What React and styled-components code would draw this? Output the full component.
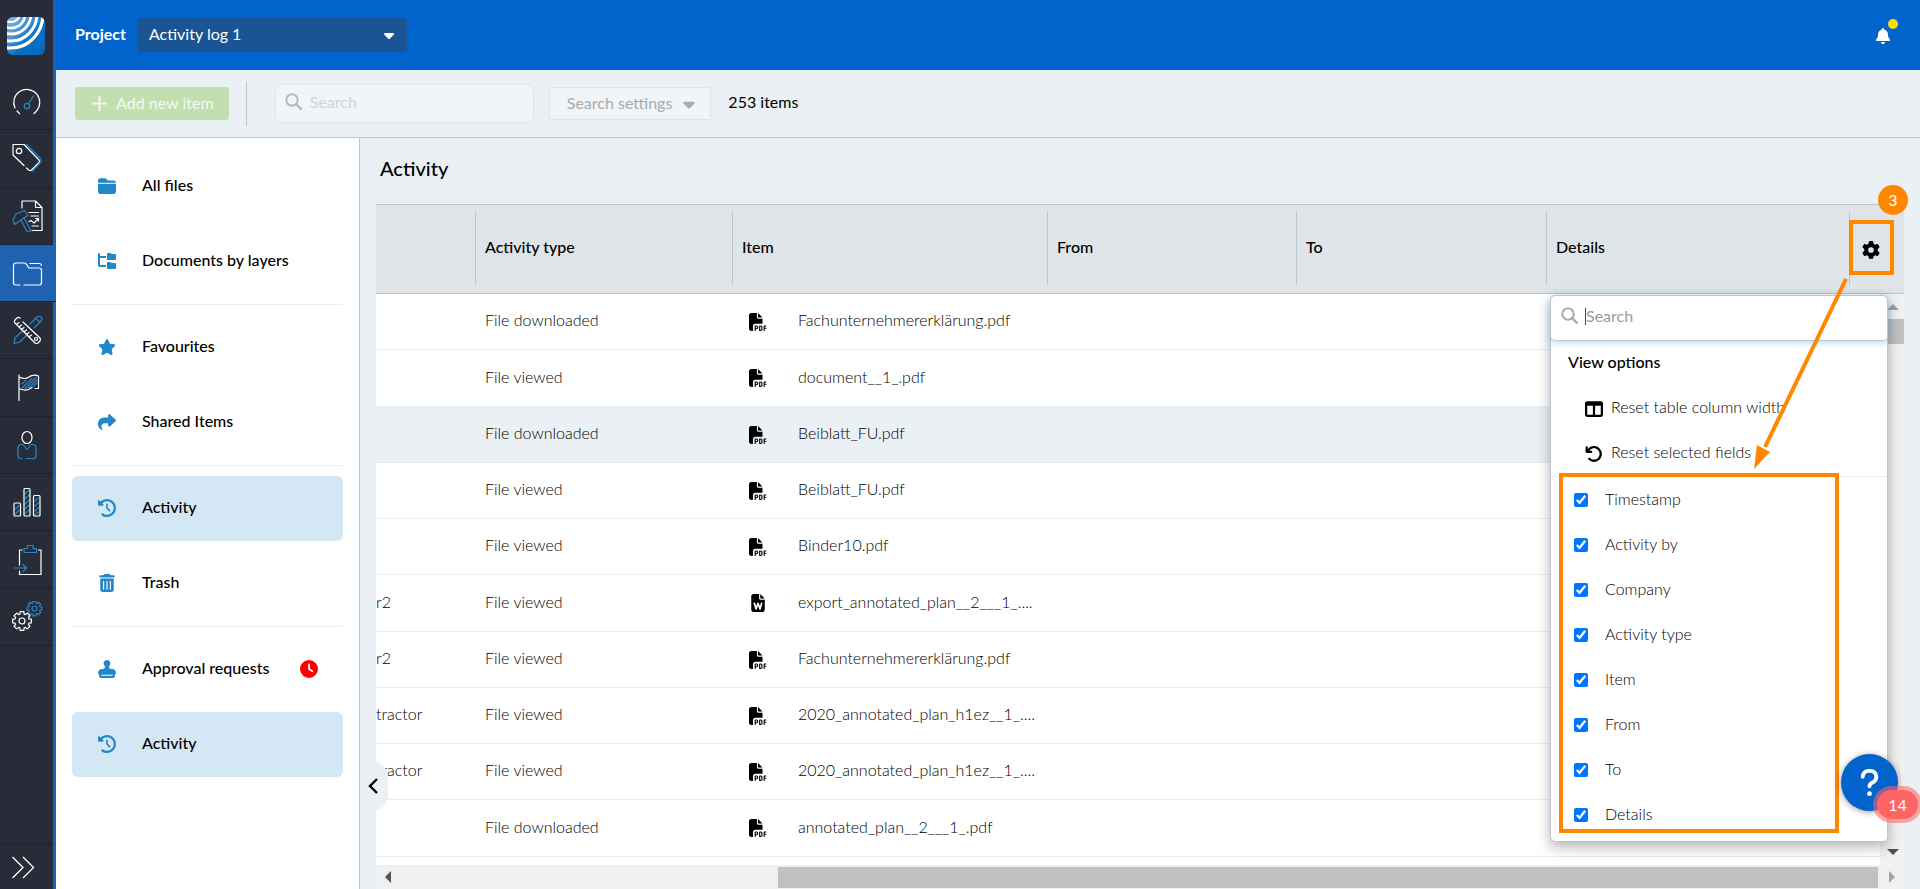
import { useState } from "react";
import styled, { createGlobalStyle, css } from "styled-components";
import {
  FaArrowRotateLeft,
  FaBell,
  FaCaretDown,
  FaClock,
  FaClockRotateLeft,
  FaFilePdf,
  FaFileWord,
  FaFolderClosed,
  FaFolderTree,
  FaGear,
  FaQuestion,
  FaShare,
  FaStamp,
  FaStar,
  FaTableColumns,
  FaTrashCan,
} from "react-icons/fa6";

const colors = {
  rail: "#272c38",
  railLine: "#1c212b",
  railBlue: "#1e62b0",
  header: "#0064cc",
  select: "#1a5493",
  page: "#ebf0f4",
  tableHead: "#dfe4e8",
  line: "#b9c6d3",
  softLine: "#ededed",
  icon: "#2287c9",
  active: "#d4e7f4",
  note: "#ff8700",
};

const GlobalStyle = createGlobalStyle`
  * {
    box-sizing: border-box;
  }
  body {
    margin: 0;
    overflow: hidden;
    font-family: Lato, "Liberation Sans", sans-serif;
    font-size: 16px;
    line-height: 20px;
    color: #000;
  }
  button, input, select {
    font: inherit;
    color: inherit;
  }
`;

const Page = styled.div`
  display: flex;
  height: 100vh;
  background: ${colors.page};
`;

const Rail = styled.nav`
  display: flex;
  flex-direction: column;
  flex: none;
  width: 56px;
  background: ${colors.rail};
  border-right: 3px solid ${colors.railBlue};
`;

const LogoLink = styled.a`
  display: flex;
  justify-content: center;
  padding: 17px 8px 18px 7px;
  height: 73px;
`;

const RailItems = styled.div`
  display: grid;
  grid-template-rows: repeat(10, 1fr);
  height: 573px;
`;

const RailLink = styled.a`
  display: flex;
  align-items: center;
  justify-content: center;
  border-bottom: 1px solid ${colors.railLine};
  ${({ $active }) =>
    $active &&
    css`
      margin-right: -3px;
      padding-right: 3px;
      background: ${colors.railBlue};
    `}
`;

const RailToggle = styled.button`
  display: flex;
  align-items: center;
  height: 45px;
  margin-top: auto;
  padding: 0 12px;
  background: none;
  border: 0;
  border-top: 1px solid ${colors.railLine};
`;

const LineSvg = styled.svg`
  width: 32px;
  height: 32px;
  fill: none;
  stroke: #fff;
  stroke-width: 1.2;
  stroke-linecap: round;
  stroke-linejoin: round;

  .blue {
    stroke: #2a86c6;
  }
`;

const Workspace = styled.div`
  display: flex;
  flex-direction: column;
  flex: 1;
  min-width: 0;
`;

const Header = styled.header`
  display: flex;
  align-items: center;
  height: 70px;
  padding: 0 20px 0 19px;
  background: ${colors.header};
  color: #fff;
`;

// lifts a text slightly above the centre line of the icons beside it
const Label = styled.span`
  display: block;
  padding-bottom: ${({ $lift = 3 }) => $lift}px;
`;

const ProjectLabel = styled.label`
  padding-bottom: 3px;
  font-weight: 700;
`;

const SelectWrap = styled.div`
  display: grid;
  align-items: center;
  width: 269px;
  margin-left: 12px;

  > * {
    grid-area: 1 / 1;
  }
  > svg {
    justify-self: end;
    margin-right: 10px;
    pointer-events: none;
  }
`;

const ProjectSelect = styled.select`
  width: 100%;
  height: 34px;
  padding: 0 11px 2px;
  appearance: none;
  background: ${colors.select};
  border: 0;
  border-radius: 3px;
`;

const BellButton = styled.button`
  position: relative;
  display: flex;
  margin-left: auto;
  padding: 1px 9px 0;
  background: none;
  border: 0;
  color: #fff;
`;

const BellDot = styled.span`
  position: absolute;
  top: -8px;
  right: 2px;
  width: 10px;
  height: 10px;
  border-radius: 50%;
  background: #ffdc00;
`;

const Toolbar = styled.div`
  display: flex;
  align-items: center;
  height: 68px;
  padding: 0 19px;
  border-bottom: 1px solid ${colors.line};
`;

const AddButton = styled.button`
  display: flex;
  align-items: center;
  gap: 9px;
  height: 33px;
  padding: 0 15px 0 17px;
  background: #c2dfb0;
  border: 0;
  border-radius: 3px;
  color: #f1f6f0;
  font-weight: 500;
`;

const ToolbarDivider = styled.span`
  width: 1px;
  height: 45px;
  margin: 0 28px 0 17px;
  background: ${colors.line};
`;

const ToolbarSearch = styled.label`
  display: flex;
  align-items: center;
  gap: 7px;
  width: 259px;
  height: 39px;
  padding: 0 9px 3px;
  background: #f1f5f8;
  border: 1px solid #e0e6ea;
  border-radius: 5px;
  color: #b4b8bb;
`;

const SearchInput = styled.input`
  flex: 1;
  min-width: 0;
  padding: 0;
  background: none;
  border: 0;
  outline: 0;

  &::placeholder {
    color: ${({ $tone }) => $tone};
    opacity: 1;
  }
`;

const SettingsButton = styled.button`
  display: flex;
  align-items: center;
  gap: 8px;
  height: 33px;
  margin: 0 17px 0 15px;
  padding: 0 12px 0 17px;
  background: #f1f5f8;
  border: 1px solid #dce2e7;
  border-radius: 2px;
  color: #a6abae;
`;

const Columns = styled.div`
  display: flex;
  flex: 1;
  min-height: 0;
`;

const Sidebar = styled.nav`
  display: flex;
  flex-direction: column;
  gap: 10px;
  flex: none;
  width: 304px;
  padding: 16px;
  background: #fff;
  border-right: 1px solid ${colors.line};
`;

const SidebarLink = styled.a`
  display: flex;
  align-items: center;
  gap: 26px;
  height: 65px;
  padding: 0 25px 2px 26px;
  border-radius: 6px;
  background: ${({ $active }) => ($active ? colors.active : "transparent")};
  color: #000;
  font-weight: 500;
  text-decoration: none;

  > svg {
    flex: none;
    width: 18px;
    height: 18px;
    color: ${colors.icon};
  }
`;

const PendingBadge = styled.span`
  display: flex;
  margin-left: auto;
  color: #f00;
`;

const SidebarDivider = styled.hr`
  width: 100%;
  height: 1px;
  margin: 0;
  border: 0;
  background: ${colors.softLine};
`;

const Main = styled.main`
  position: relative;
  display: flex;
  flex-direction: column;
  flex: 1;
  min-width: 0;
  padding: 0 16px;
`;

const Title = styled.h1`
  margin: 0;
  padding: 16px 4px 22px;
  font-size: 20px;
  line-height: 28px;
  font-weight: 500;
`;

const TableArea = styled.section`
  position: relative;
  display: flex;
  flex-direction: column;
  flex: 1;
  min-height: 0;
`;

const TableClip = styled.div`
  flex: 1;
  min-height: 0;
  overflow: hidden;
  background: #fff;
`;

const Table = styled.table`
  width: 100%;
  table-layout: fixed;
  border-collapse: separate;
  border-spacing: 0;
  font-weight: 300;

  th {
    height: 90px;
    padding: 0 0 2px;
    background: ${colors.tableHead};
    border-top: 1px solid ${colors.line};
    border-bottom: 1px solid ${colors.line};
    text-align: left;
  }
  tbody tr {
    height: 56px;
  }
  tbody tr:nth-child(4n + 2) {
    height: 57px;
  }
  td {
    padding: 0 9px 0 10px;
    border-bottom: 1px solid ${colors.softLine};
    white-space: nowrap;
    color: #000;
  }
  td:first-child {
    padding: 0;
  }
`;

const TableRow = styled.tr`
  background: ${({ $hovered }) => ($hovered ? colors.page : "#fff")};
`;

const Column = styled.col`
  width: ${({ $width }) => $width};
`;

const HeadCell = styled.div`
  display: flex;
  align-items: center;
  height: 73px;
  padding: 0 0 2px 9px;
  border-left: 1px solid ${({ $plain }) => ($plain ? "transparent" : colors.line)};
  font-weight: 500;
`;

const GearButton = styled.button`
  display: flex;
  align-items: center;
  justify-content: center;
  width: 45px;
  height: 55px;
  margin-left: -10px;
  padding: 5px 1px 0 0;
  background: none;
  border: 4px solid ${colors.note};
`;

const StepBadge = styled.span`
  position: absolute;
  top: -19px;
  right: -4px;
  width: 30px;
  height: 30px;
  border-radius: 50%;
  background: ${colors.note};
  color: #fff;
  line-height: 29px;
  text-align: center;
`;

const FileCell = styled.div`
  display: flex;
  align-items: center;
  gap: 31px;
  padding-left: 7px;

  svg {
    flex: none;
    width: 18px;
    height: 18px;
    color: #000;
  }
`;

const ScrollTrackX = styled.div`
  display: flex;
  align-items: center;
  flex: none;
  height: 24px;
  background: #f0f0f0;
`;

const ScrollThumbX = styled.span`
  flex: 1;
  height: 21px;
  margin: 0 11px 0 387px;
  background: #c0c0c0;
`;

const ScrollTrackY = styled.div`
  position: absolute;
  top: 90px;
  right: 0;
  bottom: 24px;
  display: flex;
  flex-direction: column;
  align-items: center;
  width: 24px;
  padding: 10px 0;
  background: #f1f1f1;
`;

const ScrollThumbY = styled.span`
  width: 16px;
  height: 25px;
  margin: 9px 0 auto 7px;
  background: #c0c0c0;
`;

const Arrow = styled.svg`
  flex: none;
  display: block;
  fill: ${({ $tone }) => $tone};
  ${({ $side }) => $side === "left" && "margin-left: 9px;"}
  ${({ $side }) => $side === "right" && "margin-right: 9px;"}
  ${({ $side }) => !$side && "margin-left: 1px;"}
`;

const CollapseButton = styled.button`
  position: absolute;
  left: 0;
  bottom: 78px;
  display: flex;
  align-items: center;
  width: 28px;
  height: 50px;
  padding: 0 0 0 8px;
  background: ${colors.page};
  border: 0;
  border-radius: 0 16px 16px 0;
`;

const OptionsPanel = styled.div`
  position: absolute;
  top: 91px;
  right: 16px;
  width: 338px;
  background: #fff;
  border: 1px solid ${colors.line};
  border-radius: 5px;
  box-shadow: 0 5px 14px rgba(0, 0, 0, 0.3);
  font-weight: 300;
`;

const PanelSearch = styled.label`
  display: flex;
  align-items: center;
  gap: 6px;
  height: 46px;
  margin: -1px -1px 0;
  padding: 0 10px 4px;
  background: #fff;
  border: 1px solid ${colors.line};
  border-radius: 5px;
  box-shadow: 0 2px 6px rgba(60, 150, 220, 0.35);
  color: #aaa;
  font-weight: 400;
`;

const FocusedSearchInput = styled(SearchInput)`
  height: 17px;
  border-left: 1px solid #444;
`;

const PanelHeading = styled.h2`
  margin: 0;
  padding: 10px 17px 13px;
  font-size: 16px;
  line-height: 22px;
  font-weight: 500;
`;

const ResetButton = styled.button`
  display: flex;
  align-items: center;
  gap: 8px;
  width: 100%;
  height: 45px;
  padding: 0 34px;
  background: none;
  border: 0;

  svg {
    width: 18px;
    height: 18px;
  }
`;

const FieldList = styled.div`
  position: relative;
  padding-bottom: 4px;
  border-top: 1px solid ${colors.softLine};
`;

const FieldLabel = styled.label`
  display: flex;
  align-items: center;
  gap: 17px;
  height: 45px;
  padding-left: 23px;
`;

const FieldCheckbox = styled.input`
  width: 14px;
  height: 14px;
  margin: 0;
  accent-color: #0075ff;
`;

const ListFrame = styled.span`
  position: absolute;
  top: -4px;
  right: 48px;
  bottom: 8px;
  left: 8px;
  border: 4px solid ${colors.note};
  pointer-events: none;
`;

const PointerArrow = styled.svg`
  position: absolute;
  top: 73px;
  right: 54px;
  pointer-events: none;
`;

const HelpButton = styled.button`
  position: absolute;
  right: 22px;
  bottom: 78px;
  display: flex;
  align-items: center;
  justify-content: center;
  width: 57px;
  height: 57px;
  padding: 0;
  background: ${colors.header};
  border: 0;
  border-radius: 50%;
  box-shadow: 0 1px 6px rgba(0, 0, 0, 0.4);
  color: #fff;
`;

const HelpCount = styled.span`
  position: absolute;
  top: 36px;
  left: 36px;
  width: 41px;
  height: 29px;
  border-radius: 15px;
  background: #ff6464;
  box-shadow: 0 0 0 4px rgba(255, 100, 100, 0.55);
  line-height: 29px;
  text-align: center;
`;

const Logo = () => (
  <svg width="38" height="38" viewBox="0 0 38 38" aria-hidden="true">
    <defs>
      <linearGradient id="logoFill" x1="0" y1="0" x2="1" y2="1">
        <stop offset="0" stopColor="#8fbfe6" />
        <stop offset="0.6" stopColor="#0a70c2" />
        <stop offset="1" stopColor="#0068bd" />
      </linearGradient>
      <clipPath id="logoClip">
        <rect width="38" height="38" rx="6" />
      </clipPath>
    </defs>
    <g clipPath="url(#logoClip)">
      <rect width="38" height="38" fill="url(#logoFill)" />
      <g fill="none" stroke="#fff">
        <ellipse cx="4" cy="-1" rx="8" ry="6" strokeWidth="2.2" />
        <ellipse cx="4" cy="-2" rx="14" ry="13" strokeWidth="2.6" />
        <ellipse cx="4" cy="-3" rx="20" ry="20" strokeWidth="2.8" />
        <ellipse cx="4" cy="-3" rx="26" ry="27" strokeWidth="3" />
        <ellipse cx="4" cy="-3" rx="32" ry="34" strokeWidth="3.2" />
      </g>
    </g>
  </svg>
);

const gearPath = (cx, cy, r) => {
  const points = [];
  for (let i = 0; i < 8; i++) {
    [
      [-0.3, 0.76],
      [-0.2, 1],
      [0.2, 1],
      [0.3, 0.76],
    ].forEach(([turn, scale]) => {
      const angle = (i * Math.PI) / 4 + turn;
      points.push(
        `${(cx + Math.cos(angle) * r * scale).toFixed(2)} ${(cy + Math.sin(angle) * r * scale).toFixed(2)}`
      );
    });
  }
  return `M${points.join("L")}Z`;
};

const railItems = [
  {
    label: "Dashboard",
    drawing: (
      <>
        <path d="M8.500 28.500 6 26M4 23A13 13 0 1 1 25.500 26L23 28.500" />
        <circle className="blue" cx="16" cy="21" r="2.700" />
        <path className="blue" d="M17.500 18.500 22.500 11" />
      </>
    ),
  },
  {
    label: "Tags",
    drawing: (
      <>
        <path d="M2 2.500V13L13 23.500M15.500 26 18 28.200Q19.500 29 20.500 28L28 20.500Q29 19 28 18L13 2.500H2" />
        <circle cx="8" cy="9" r="2.700" />
        <path className="blue" d="M15.500 2.500 29.500 16.500Q31 18.500 29.500 20.500L21.500 29" />
      </>
    ),
  },
  {
    label: "Tenders",
    drawing: (
      <>
        <path d="M11 8V1H24.500L31 7.500V30.500H21M24.500 1V7.500H31M18 12.500H27.500M20 16H27.500M18 21.500 20 20.500 23 23 27.500 18.500M24.500 18.500H27.500V21M21 26H27.500" />
        <path
          className="blue"
          d="M5 14 13.500 10.500 17 15.500 13 18 19.500 30Q18.500 32.500 16 31.500L10 20 3.500 24.500 2 20ZM10 20 13 18"
        />
      </>
    ),
  },
  {
    label: "Files",
    active: true,
    drawing: (
      <path d="M9 28H5Q2.500 28 2.500 25.500V8.500Q2.500 6 5 6H13Q15 6 16 8T18 11H28Q30.500 11 30.500 13.500V25.500Q30.500 28 28 28H13M19 6.500H28Q30.500 6.500 30.500 8.500" />
    ),
  },
  {
    label: "Plans",
    drawing: (
      <>
        <path
          className="blue"
          d="M19 10 26 3Q28 1.500 30 3T30 7L23 14M16.500 20.500 8 28.500 3 29.500 4 24 12.500 16M25 4.500 28.500 8"
        />
        <path d="M12 8 29 24Q30 25.500 29 27L27 29Q25.500 30 24 29L3.500 8.500Q3 7 4 6L6.500 3.500Q8 3 9 4M6 10 8 8.500M8.500 12.500 10.500 11M11 15 13 13.500M13.500 17.500 15.500 16M16 20 18 18.500M18.500 22.500 20.500 21" />
        <circle cx="25" cy="25" r="1.500" />
      </>
    ),
  },
  {
    label: "Milestones",
    drawing: (
      <>
        <path d="M8 3V28.500M8 5Q14 8 18 5T27.500 4V16.500H24M21 15.500Q16 19 13 18T8 17" />
        <path
          className="blue"
          d="M11 12 15 8M11 16 21 6.500M14 16.500 25 5.500M17.500 16 26 8M22 14.500 26 11"
        />
      </>
    ),
  },
  {
    label: "Contacts",
    drawing: (
      <>
        <ellipse cx="16" cy="8.500" rx="5" ry="6" />
        <path
          className="blue"
          d="M11 29.500H9.500Q7 29.500 7 27V19Q7 15.500 10.500 15.500H12L16 20.500 20 15.500H21.500Q25 15.500 25 19V27Q25 29.500 22.500 29.500H15"
        />
      </>
    ),
  },
  {
    label: "Reports",
    drawing: (
      <>
        <path
          className="blue"
          d="M4.500 23 8 19.500M4.500 28 8 24M14 8 17.500 4.500M14 13 18 9M14 18 18 14M14 23 18 19M14 27.500 18 24M24 15 27 12M24 20 27.500 16.500M24 25 27.500 21.500M24 28.500 27.500 26"
        />
        <rect x="3" y="17" width="6.500" height="13" rx="1" />
        <rect x="13" y="2.500" width="6" height="27.500" rx="1" />
        <rect x="22.500" y="9.500" width="6.500" height="20.500" rx="1" />
      </>
    ),
  },
  {
    label: "Tasks",
    drawing: (
      <>
        <path d="M11 6H8.500V21M8.500 27V30.500H30V6H27.500" />
        <path className="blue" d="M13 4.500H16.500V1.500H22V4.500H25.500V8.500H13ZM3 24H15.500M12 20.500 15.500 24 12 27.500" />
      </>
    ),
  },
  {
    label: "Settings",
    drawing: (
      <>
        <path className="blue" d={gearPath(23.5, 7.5, 7.5)} />
        <circle className="blue" cx="23.500" cy="7.500" r="2.500" />
        <path d={gearPath(11, 20, 9.5)} />
        <circle cx="11" cy="20" r="3" />
      </>
    ),
  },
];

const sidebarGroups = [
  [
    { label: "All files", Icon: FaFolderClosed },
    { label: "Documents by layers", Icon: FaFolderTree },
  ],
  [
    { label: "Favourites", Icon: FaStar },
    { label: "Shared Items", Icon: FaShare },
  ],
  [
    { label: "Activity", Icon: FaClockRotateLeft, active: true },
    { label: "Trash", Icon: FaTrashCan },
  ],
  [
    { label: "Approval requests", Icon: FaStamp, pending: true },
    { label: "Activity", Icon: FaClockRotateLeft, active: true },
  ],
];

const columnWidths = ["99px", "257px", "315px", "249px", "250px", "auto", "55px"];
const columnNames = ["Activity type", "Item", "From", "To", "Details"];

const rows = [
  { type: "File downloaded", file: "Fachunternehmererklärung.pdf" },
  { type: "File viewed", file: "document__1_.pdf" },
  { type: "File downloaded", file: "Beiblatt_FU.pdf", hovered: true },
  { type: "File viewed", file: "Beiblatt_FU.pdf" },
  { type: "File viewed", file: "Binder10.pdf" },
  { company: "r2", type: "File viewed", file: "export_annotated_plan__2___1_....", word: true },
  { company: "r2", type: "File viewed", file: "Fachunternehmererklärung.pdf" },
  { company: "tractor", type: "File viewed", file: "2020_annotated_plan_h1ez__1_...." },
  { company: "tractor", type: "File viewed", file: "2020_annotated_plan_h1ez__1_...." },
  { type: "File downloaded", file: "annotated_plan__2___1_.pdf" },
];

const fieldNames = [
  "Timestamp",
  "Activity by",
  "Company",
  "Activity type",
  "Item",
  "From",
  "To",
  "Details",
];

const SearchIcon = () => (
  <svg width="18" height="18" viewBox="0 0 18 18" fill="none" stroke="currentColor">
    <circle cx="7" cy="7" r="5.700" strokeWidth="2" />
    <path d="M11 11 16.500 16.500" strokeWidth="2.400" />
  </svg>
);

const ViewOptions = () => {
  const [checked, setChecked] = useState(fieldNames);

  function onToggle(name) {
    setChecked(
      checked.includes(name)
        ? checked.filter((item) => item !== name)
        : [...checked, name]
    );
  }

  return (
    <OptionsPanel>
      <PanelSearch>
        <SearchIcon />
        <FocusedSearchInput
          type="text"
          placeholder="Search"
          aria-label="Search fields"
          $tone="#9b9b9b"
        />
      </PanelSearch>
      <PanelHeading>View options</PanelHeading>
      <ResetButton type="button">
        <FaTableColumns />
        <Label>Reset table column width</Label>
      </ResetButton>
      <ResetButton type="button">
        <FaArrowRotateLeft />
        <Label>Reset selected fields</Label>
      </ResetButton>
      <FieldList>
        {fieldNames.map((name) => (
          <FieldLabel key={name}>
            <FieldCheckbox
              type="checkbox"
              checked={checked.includes(name)}
              onChange={() => onToggle(name)}
            />
            <Label $lift={2}>{name}</Label>
          </FieldLabel>
        ))}
        <ListFrame />
      </FieldList>
    </OptionsPanel>
  );
};

const ActivityTable = () => (
  <TableArea>
    <TableClip>
      <Table>
        <colgroup>
          {columnWidths.map((width, index) => (
            <Column key={index} $width={width} />
          ))}
        </colgroup>
        <thead>
          <tr>
            <th aria-label="Company">
              <HeadCell $plain />
            </th>
            {columnNames.map((name) => (
              <th key={name}>
                <HeadCell>{name}</HeadCell>
              </th>
            ))}
            <th>
              <HeadCell>
                <GearButton type="button" aria-label="View options">
                  <FaGear size={18} />
                </GearButton>
              </HeadCell>
            </th>
          </tr>
        </thead>
        <tbody>
          {rows.map((row, index) => (
            <TableRow key={index} $hovered={row.hovered}>
              <td>
                <Label>{row.company}</Label>
              </td>
              <td>
                <Label>{row.type}</Label>
              </td>
              <td>
                <FileCell>
                  {row.word ? <FaFileWord /> : <FaFilePdf />}
                  <Label>{row.file}</Label>
                </FileCell>
              </td>
              <td />
              <td />
              <td />
              <td />
            </TableRow>
          ))}
        </tbody>
      </Table>
    </TableClip>
    <ScrollTrackX>
      <Arrow $side="left" $tone="#505050" width="6" height="12">
        <path d="M6 0V12L0 6Z" />
      </Arrow>
      <ScrollThumbX />
      <Arrow $side="right" $tone="#a3a3a3" width="6" height="12">
        <path d="M0 0V12L6 6Z" />
      </Arrow>
    </ScrollTrackX>
    <ScrollTrackY>
      <Arrow $tone="#a3a3a3" width="12" height="6">
        <path d="M0 6H12L6 0Z" />
      </Arrow>
      <ScrollThumbY />
      <Arrow $tone="#505050" width="12" height="6">
        <path d="M0 0H12L6 6Z" />
      </Arrow>
    </ScrollTrackY>
    <StepBadge>3</StepBadge>
    <ViewOptions />
    <PointerArrow width="100" height="198" aria-hidden="true">
      <path d="M96 2 15 170" stroke={colors.note} strokeWidth="4" />
      <path d="M4 192 7 168 20 175Z" fill={colors.note} />
    </PointerArrow>
  </TableArea>
);

export default function App() {
  return (
    <Page>
      <GlobalStyle />
      <Rail aria-label="Modules">
        <LogoLink href="#" aria-label="Home">
          <Logo />
        </LogoLink>
        <RailItems>
          {railItems.map(({ label, active, drawing }) => (
            <RailLink key={label} href="#" aria-label={label} $active={active}>
              <LineSvg viewBox="0 0 32 32">{drawing}</LineSvg>
            </RailLink>
          ))}
        </RailItems>
        <RailToggle type="button" aria-label="Expand">
          <svg width="23" height="23" fill="none" stroke="#fff" strokeWidth="1.3">
            <path d="M0.500 1 11 11.500 0.500 22M11 1 21.500 11.500 11 22" />
          </svg>
        </RailToggle>
      </Rail>
      <Workspace>
        <Header>
          <ProjectLabel htmlFor="project">Project</ProjectLabel>
          <SelectWrap>
            <ProjectSelect id="project">
              <option>Activity log 1</option>
            </ProjectSelect>
            <FaCaretDown size={16} />
          </SelectWrap>
          <BellButton type="button" aria-label="Notifications">
            <FaBell size={16} />
            <BellDot />
          </BellButton>
        </Header>
        <Toolbar>
          <AddButton type="button">
            <svg width="15" height="15" stroke="currentColor" strokeWidth="2">
              <path d="M7.500 0V15M0 7.500H15" />
            </svg>
            <Label $lift={2}>Add new item</Label>
          </AddButton>
          <ToolbarDivider />
          <ToolbarSearch>
            <SearchIcon />
            <SearchInput type="text" placeholder="Search" aria-label="Search" $tone="#d0d4d7" />
          </ToolbarSearch>
          <SettingsButton type="button">
            <Label $lift={2}>Search settings</Label>
            <FaCaretDown size={18} />
          </SettingsButton>
          <Label>253 items</Label>
        </Toolbar>
        <Columns>
          <Sidebar aria-label="Files">
            {sidebarGroups.map((group, index) => [
              index > 0 && <SidebarDivider key={`divider-${index}`} />,
              ...group.map(({ label, Icon, active, pending }) => (
                <SidebarLink key={`${index}-${label}`} href="#" $active={active}>
                  <Icon />
                  <Label $lift={1}>{label}</Label>
                  {pending && (
                    <PendingBadge>
                      <FaClock size={18} />
                    </PendingBadge>
                  )}
                </SidebarLink>
              )),
            ])}
          </Sidebar>
          <Main>
            <Title>Activity</Title>
            <ActivityTable />
            <CollapseButton type="button" aria-label="Collapse sidebar">
              <svg width="10" height="16" fill="none" stroke="#000" strokeWidth="2.400">
                <path d="M9 1 2 8 9 15" />
              </svg>
            </CollapseButton>
            <HelpButton type="button" aria-label="Help">
              <FaQuestion size={31} />
              <HelpCount>14</HelpCount>
            </HelpButton>
          </Main>
        </Columns>
      </Workspace>
    </Page>
  );
}
